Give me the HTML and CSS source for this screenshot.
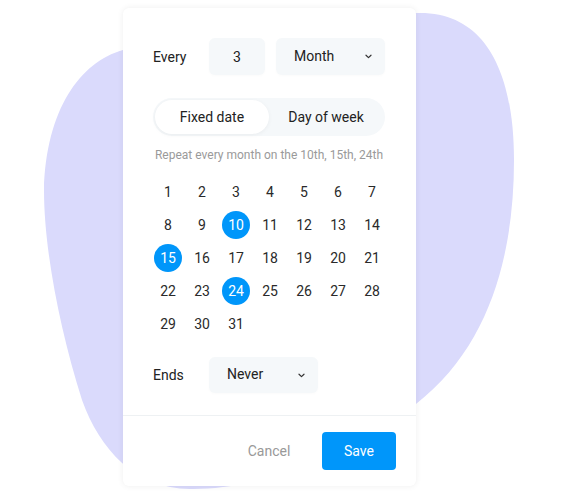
FILE: index.html
```html
<!DOCTYPE html>
<html lang="en">
<head>
    <meta charset="UTF-8">
    <meta name="viewport" content="width=device-width, initial-scale=1.0">
    <title>Repeat</title>
    <link rel="stylesheet" href="styles.css">
</head>
<body>
<div class="stage">
    <svg class="blob" width="566" height="494" viewBox="0 0 566 494">
        <path d="M 123 50 C 230 22, 330 13, 420 13 C 490 13, 514 80, 514 160 C 514 250, 492 345, 416 404 C 340 464, 250 490, 190 489 C 135 488, 100 450, 82 400 C 60 330, 44 250, 44 190 C 46 110, 80 62, 123 50 Z" fill="#dadafc"/>
    </svg>

    <div class="card">
        <div class="card-body">
            <div class="row">
                <span class="label">Every</span>
                <div class="box num">3</div>
                <div class="box select">
                    <span>Month</span>
                    <svg class="chevron" width="7" height="5" viewBox="0 0 7 5"><path d="M1 1.2 L3.5 3.6 L6 1.2" fill="none" stroke="#333" stroke-width="1.2" stroke-linecap="round" stroke-linejoin="round"/></svg>
                </div>
            </div>

            <div class="toggle">
                <div class="toggle-item active">Fixed date</div>
                <div class="toggle-item">Day of week</div>
            </div>

            <p class="hint">Repeat every month on the 10th, 15th, 24th</p>

            <div class="days">
                <span>1</span><span>2</span><span>3</span><span>4</span><span>5</span><span>6</span><span>7</span>
                <span>8</span><span>9</span><span class="picked">10</span><span>11</span><span>12</span><span>13</span><span>14</span>
                <span class="picked">15</span><span>16</span><span>17</span><span>18</span><span>19</span><span>20</span><span>21</span>
                <span>22</span><span>23</span><span class="picked">24</span><span>25</span><span>26</span><span>27</span><span>28</span>
                <span>29</span><span>30</span><span>31</span>
            </div>

            <div class="row ends">
                <span class="label">Ends</span>
                <div class="box select">
                    <span>Never</span>
                    <svg class="chevron" width="7" height="5" viewBox="0 0 7 5"><path d="M1 1.2 L3.5 3.6 L6 1.2" fill="none" stroke="#333" stroke-width="1.2" stroke-linecap="round" stroke-linejoin="round"/></svg>
                </div>
            </div>
        </div>

        <div class="card-footer">
            <button class="btn-cancel">Cancel</button>
            <button class="btn-save">Save</button>
        </div>
    </div>
</div>
</body>
</html>
```

FILE: styles.css
```css
/* page */
body {
    margin: 0;
    font-family: Roboto, "Liberation Sans", Arial, sans-serif;
    background-color: #fff;
    color: #222;
}
.stage {
    position: relative;
    width: 566px;
    height: 494px;
    overflow: hidden;
}
.blob {
    position: absolute;
    left: 0;
    top: 0;
}

/* card */
.card {
    position: relative;
    width: 293px;
    margin: 8px 0 0 123px;
    background-color: #fff;
    border-radius: 6px;
    box-shadow: 0 0 6px rgba(0, 0, 0, 0.07);
}
.card-body {
    padding: 30px 31px 22px 30px;
    border-bottom: 1px solid #eef1f3;
}
.row {
    display: flex;
    align-items: center;
    height: 37px;
    margin-bottom: 23px;
}
.label {
    width: 56px;
    font-size: 14px;
    color: #222;
}
.box {
    height: 37px;
    display: flex;
    align-items: center;
    background-color: #f5f8fa;
    border-radius: 6px;
    font-size: 14px;
    color: #222;
    box-shadow: 0 1px 3px rgba(0, 0, 0, 0.02);
}
.num {
    width: 56px;
    justify-content: center;
    margin-right: 11px;
}
.select {
    width: 109px;
    box-sizing: border-box;
    padding: 0 13px 0 18px;
    justify-content: space-between;
}
.select span {
    margin-top: -2px;
}

/* fixed date / day of week */
.toggle {
    display: flex;
    height: 38px;
    box-sizing: border-box;
    padding: 2px;
    background-color: #f5f8fa;
    border-radius: 19px;
    margin-bottom: 10px;
}
.toggle-item {
    flex: 1;
    display: flex;
    align-items: center;
    justify-content: center;
    font-size: 14px;
    color: #222;
    border-radius: 17px;
}
.toggle-item.active {
    background-color: #fff;
    box-shadow: 0 1px 4px rgba(0, 0, 0, 0.05);
}
.hint {
    margin: 0 0 11px;
    font-size: 12px;
    line-height: 18px;
    color: #9a9a9a;
    text-align: center;
}

/* calendar */
.days {
    display: grid;
    grid-template-columns: repeat(7, 34px);
    grid-auto-rows: 33px;
    margin: 0 -3px 17px -2px;
}
.days span {
    display: flex;
    align-items: center;
    justify-content: center;
    font-size: 14px;
    color: #2a2a2a;
}
.days .picked {
    width: 28px;
    height: 28px;
    margin: auto;
    border-radius: 50%;
    background-color: #0096fa;
    color: #fff;
}
.ends {
    height: 36px;
    margin-bottom: 0;
}
.ends .box {
    height: 36px;
}

/* footer */
.card-footer {
    display: flex;
    justify-content: flex-end;
    align-items: center;
    padding: 16px 20px 16px;
}
.card-footer button {
    font-family: inherit;
    font-size: 14px;
    border: none;
    cursor: pointer;
}
.btn-cancel {
    background: none;
    color: #999;
    width: 74px;
    margin-right: 16px;
}
.btn-save {
    width: 74px;
    height: 38px;
    border-radius: 4px;
    background-color: #0096fa;
    color: #fff;
}
```
